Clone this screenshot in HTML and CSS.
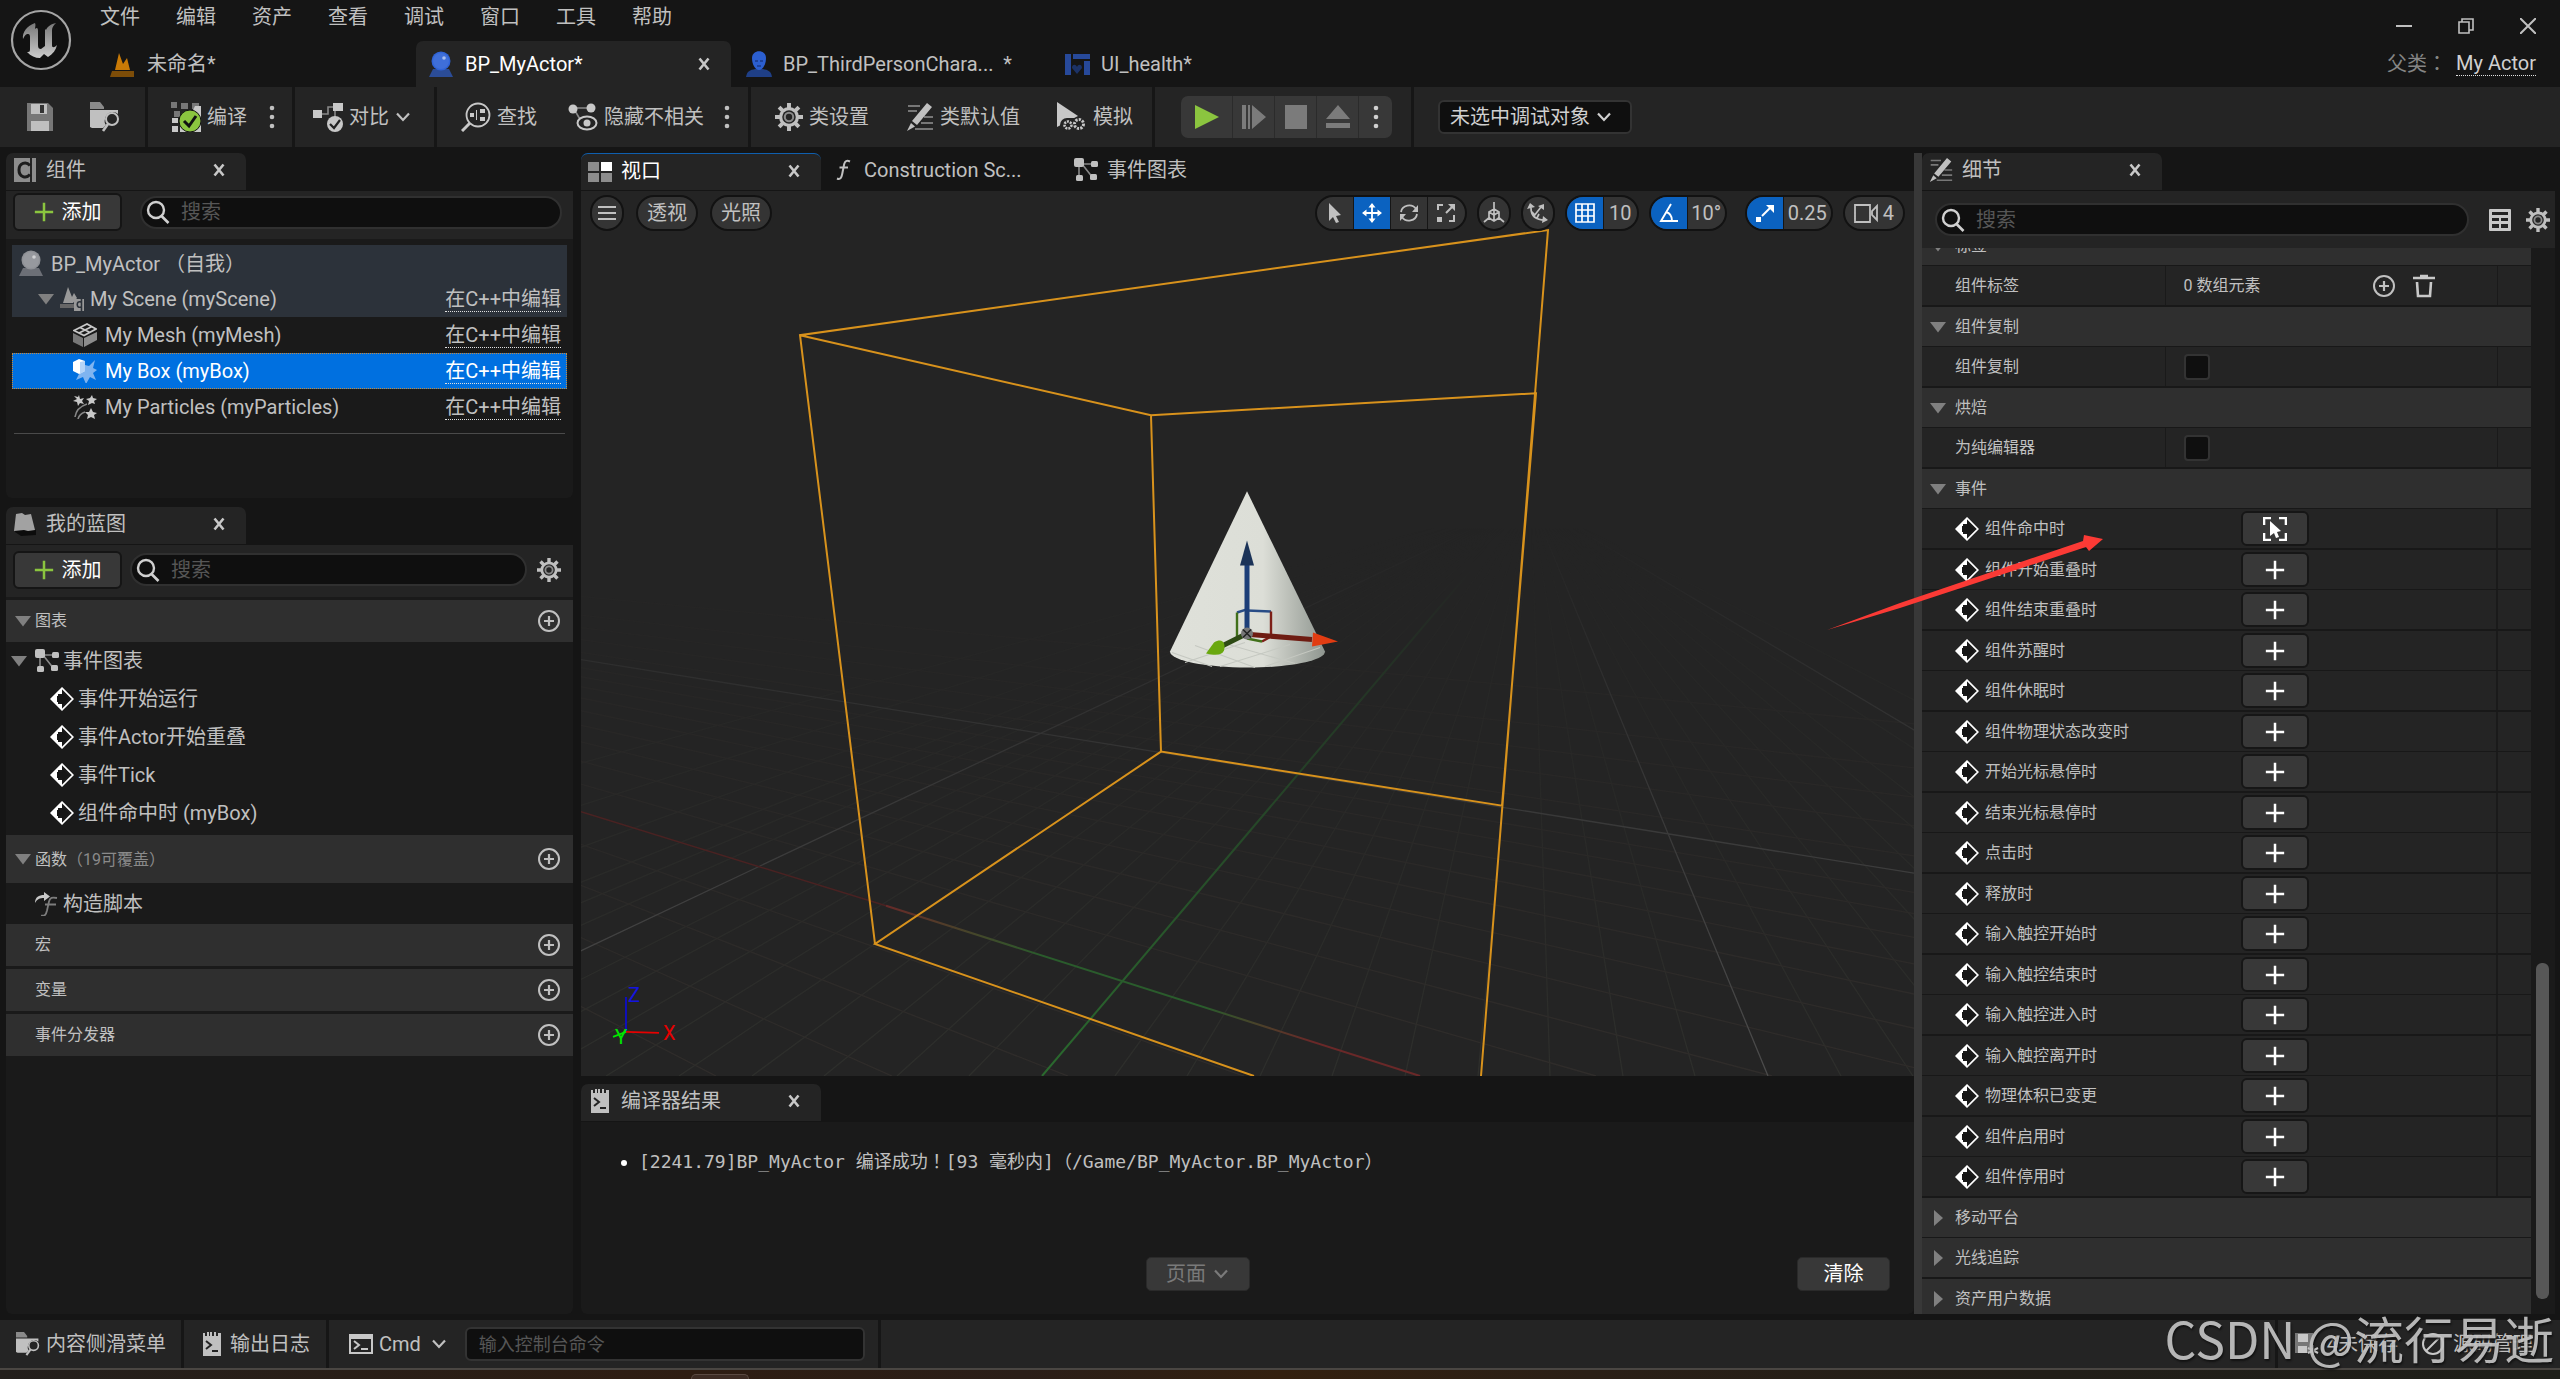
FILE: index.html
```html
<!DOCTYPE html>
<html lang="zh-CN">
<head>
<meta charset="utf-8">
<title>BP_MyActor</title>
<link rel="stylesheet" href="styles.css">
</head>
<body>
<svg class="sprite" aria-hidden="true">
  <symbol id="i-close" viewBox="0 0 24 24"><path d="M7.500 6.500L16.500 17.500M16.500 6.500L7.500 17.500" stroke="currentColor" stroke-width="2.600" fill="none"/></symbol>
  <symbol id="i-plus" viewBox="0 0 24 24"><path d="M12 1v22M1 12h22" stroke="currentColor" stroke-width="3" fill="none"/></symbol>
  <symbol id="i-chev" viewBox="0 0 16 16"><path d="M2 4.500L8 11l6-6.500" stroke="currentColor" stroke-width="2.200" fill="none"/></symbol>
  <symbol id="i-down" viewBox="0 0 16 16"><path d="M0 3h16L8 13.500z" fill="currentColor"/></symbol>
  <symbol id="i-right" viewBox="0 0 16 16"><path d="M4 0v16l9-8z" fill="currentColor"/></symbol>
  <symbol id="i-search" viewBox="0 0 24 24"><circle cx="10" cy="10" r="8" stroke="currentColor" stroke-width="2.400" fill="none"/><path d="M15.500 16l7 7" stroke="currentColor" stroke-width="2.600"/></symbol>
  <symbol id="i-dots" viewBox="0 0 8 24"><g fill="currentColor"><circle cx="4" cy="3" r="2.300"/><circle cx="4" cy="12" r="2.300"/><circle cx="4" cy="21" r="2.300"/></g></symbol>
  <symbol id="i-addc" viewBox="0 0 24 24"><circle cx="12" cy="12" r="10" stroke="currentColor" stroke-width="2" fill="none"/><path d="M12 7v10M7 12h10" stroke="currentColor" stroke-width="2.200"/></symbol>
  <symbol id="i-gear" viewBox="0 0 24 24"><path d="M12 0v24M0 12h24M3.500 3.500l17 17M20.500 3.500l-17 17" stroke="currentColor" stroke-width="3.400"/><circle cx="12" cy="12" r="8.600" fill="currentColor"/><circle cx="12" cy="12" r="5.800" fill="#242424"/><circle cx="12" cy="12" r="3.600" stroke="#8a8a8a" stroke-width="1.800" fill="none"/></symbol>
  <symbol id="i-pen" viewBox="0 0 28 28"><path d="M2 3h12M2 8h9M18 14h9M15 20h12M9 26h18" stroke="#777" stroke-width="1.800"/><path d="M21 0l5 4L11 22l-5-4zM5 20l4 3.500L1 28z" fill="currentColor"/></symbol>
  <symbol id="i-event" viewBox="0 0 24 24"><path d="M12 1.200L22.800 12 12 22.800 1.200 12z" fill="#1a1a1a" stroke="#fff" stroke-width="1.700"/><path d="M12 1L1 12l11 11v-6H8V7h4z" fill="#fff"/><path d="M7 9h5V6l6.500 6-6.500 6v-3H7z" fill="#161616"/></symbol>
  <symbol id="i-graph" viewBox="0 0 24 24"><path d="M6 6h15M5 6v14M8 6l11 14" stroke="#888" stroke-width="1.600"/><g fill="currentColor"><rect width="10" height="9" rx="2"/><rect x="17" y="3" width="7" height="6" rx="1.500"/><rect x="2" y="17" width="7" height="6" rx="1.500"/><rect x="16" y="16" width="7" height="6" rx="1.500"/></g></symbol>
  <symbol id="i-func" viewBox="0 0 24 24"><path d="M6 20.500c3.500 1.500 4.500-1 5.200-4.500l2-10c.8-3 2.500-4 5.800-2.500M8.500 9.500h8.500" stroke="currentColor" stroke-width="2" fill="none"/></symbol>
  <symbol id="i-folder" viewBox="0 0 30 30"><path d="M0 0h10l4 5v2H0z" fill="#8a8a8a"/><path d="M0 8h28v4c-4-4-12-2-13 5-1 3 0 5 1 6l-3 3H2L0 25z" fill="currentColor"/><circle cx="22" cy="17" r="6" fill="none" stroke="currentColor" stroke-width="2"/><path d="M18 22l-5 7" stroke="currentColor" stroke-width="2.600"/></symbol>
  <symbol id="i-log" viewBox="0 0 18 24"><path d="M0 1h2v3h2V0h2v4h1V0h2v4h2V0h2v4h2V1h3v23H0z" fill="currentColor"/><path d="M3 9l5 4-5 4M9 19h6" stroke="#222" stroke-width="2" fill="none"/></symbol>
  <symbol id="i-save" viewBox="0 0 28 28"><path d="M1 0h21l5 5v23H1z" fill="#777"/><path d="M5 1h16v10H5zM5 18h18v10H5z" fill="currentColor"/><path d="M14 2h4v8h-4z" fill="#333"/></symbol>
  <symbol id="i-actor" viewBox="0 0 24 26"><path d="M4 18l-4 8h24l-4-8z" fill="currentColor" opacity=".65"/><circle cx="12" cy="10" r="9.500" fill="currentColor"/><circle cx="12" cy="10" r="8" fill="#fff" opacity=".08"/><circle cx="15" cy="7" r="1.800" fill="#fff" opacity=".55"/></symbol>
</svg>

<header class="titlebar">
  <div class="logo"><svg viewBox="0 0 64 64" width="64" height="64"><defs><linearGradient id="lg" x2="0" y2="1"><stop stop-color="#777"/><stop offset="1" stop-color="#ccc"/></linearGradient></defs><circle cx="32" cy="32" r="29" fill="#111" stroke="#a5a5a5" stroke-width="2.200"/><path d="M26 15C18 18 13 24 14 31c2-4 3-5 5-5 2 0 2 2 2 4v11c0 3-1 3-3 3 4 4 8 6 13 6l4-4 4 3c5-3 8-7 9-12-3 3-5 3-5 0V22c0-3 2-5 4-7-5 1-9 4-10 7l-1-1v17l-4 3c-2 0-3-1-3-4V23c0-3-1-4-3-2 0-2 1-4 0-6z" fill="url(#lg)"/></svg></div>
  <div class="title-mid">
    <nav class="menu"><button>文件</button><button>编辑</button><button>资产</button><button>查看</button><button>调试</button><button>窗口</button><button>工具</button><button>帮助</button></nav>
    <div class="doc-tabs">
      <div class="doc-tab"><svg class="ic26" viewBox="0 0 26 26"><path d="M2 20h22v6H0z" fill="#7d4d08"/><path d="M5 19L9 2l4 11 4-6 3 12z" fill="#c97a06"/></svg><span>未命名*</span></div>
      <div class="doc-tab active"><svg class="ic26 blue"><use href="#i-actor"/></svg><span>BP_MyActor*</span><button class="x" aria-label="关闭"><svg class="ic24"><use href="#i-close"/></svg></button></div>
      <div class="doc-tab"><svg class="ic26" viewBox="0 0 26 26"><path d="M0 26c1-6 4-7 9-8h8c5 1 8 2 9 8z" fill="#1f3f86"/><path d="M6 7c0-9 14-9 14 0 0 6-3 12-7 12S6 13 6 7z" fill="#2c5fd0"/><path d="M9 10h3M14 10h3M11 15h4" stroke="#183a8a" stroke-width="1.500"/></svg><span>BP_ThirdPersonChara... &nbsp;*</span></div>
      <div class="doc-tab"><svg class="ic26" viewBox="0 0 26 26"><path d="M1 3h6v21H1zM9 3h17v5H9zM20 10h6v14h-6z" fill="#27499a"/><path d="M13 23l-5-6c0-4 4-4 5-1 1-3 5-3 5 1z" fill="#1c3266"/></svg><span>UI_health*</span></div>
    </div>
  </div>
  <div class="title-right">
    <div class="win"><button aria-label="最小化"><svg viewBox="0 0 16 16"><path d="M0 8h16" stroke="currentColor" stroke-width="2"/></svg></button><button aria-label="还原"><svg viewBox="0 0 16 16"><path d="M1 4h10v11H1zM4 4V1h11v11h-4" fill="none" stroke="currentColor" stroke-width="1.600"/></svg></button><button aria-label="关闭"><svg viewBox="0 0 16 16"><path d="M0 0l16 16M16 0L0 16" stroke="currentColor" stroke-width="2"/></svg></button></div>
    <div class="parent"><span>父类<i class="fw" lang="zh-TW">：</i></span><a class="dotted" href="#">My Actor</a></div>
  </div>
</header>

<div class="toolbar">
  <div class="tg g1"><button aria-label="保存"><svg class="ic28"><use href="#i-save"/></svg></button><button aria-label="浏览"><svg class="ic30"><use href="#i-folder"/></svg></button></div>
  <div class="tg g2"><button><svg class="ic30" viewBox="0 0 30 30"><g fill="#777"><path d="M0 0h6v6H0zM3 9h6v6H3zM10 1h7v6h-7zM21 1h7v6h-7z"/></g><path d="M1 16h6v5H1zM1 24h6v6H1zM24 4h6v26H9v-6h5z" fill="#c8c8c8"/><circle cx="19" cy="19" r="11" fill="#8bc53f" stroke="#111"/><path d="M13 19l5 5 7-10" fill="none" stroke="#111" stroke-width="3"/></svg>编译</button><button aria-label="编译选项"><svg class="dots"><use href="#i-dots"/></svg></button></div>
  <div class="tg g3"><button><svg class="ic30" viewBox="0 0 30 30"><path d="M8 12h7V5h7M22 8v8" stroke="#888" stroke-width="1.600" fill="none"/><path d="M0 8h9v8H0zM20 1h10v8H20z" fill="#c8c8c8"/><circle cx="22" cy="22" r="8" fill="#c8c8c8"/><path d="M17 22l4 4 6-8" stroke="#222" stroke-width="2.200" fill="none"/></svg>对比<svg class="ic16"><use href="#i-chev"/></svg></button></div>
  <div class="tg g4"><button><svg class="ic30" viewBox="0 0 30 30"><circle cx="17" cy="13" r="11.500" fill="none" stroke="#c8c8c8" stroke-width="1.800"/><path d="M9 21l-8 8" stroke="#c8c8c8" stroke-width="3"/><path d="M9 11h4v4H9zM19 7h5v4h-5zM19 15h5v4h-5zM15 8h1v10h-1z" fill="#c8c8c8"/></svg>查找</button><button><svg class="ic30" viewBox="0 0 30 30"><path d="M6 6h16M6 7l7 12" stroke="#888" stroke-width="1.600"/><circle cx="5" cy="7" r="4.500" fill="#c8c8c8"/><circle cx="23" cy="6" r="4.500" fill="#c8c8c8"/><ellipse cx="19" cy="21" rx="9.500" ry="6.500" fill="#242424" stroke="#c8c8c8" stroke-width="2"/><circle cx="19" cy="21" r="3.500" fill="#c8c8c8"/></svg>隐藏不相关</button><button aria-label="更多"><svg class="dots"><use href="#i-dots"/></svg></button></div>
  <div class="tg g5"><button><svg class="ic28"><use href="#i-gear"/></svg>类设置</button><button><svg class="ic28"><use href="#i-pen"/></svg>类默认值</button><button><svg class="ic30" viewBox="0 0 30 30"><path d="M0 0l21 14L0 25z" fill="#c8c8c8"/><rect x="3" y="16" width="27" height="14" rx="7" fill="#242424"/><circle cx="11" cy="23" r="3.500" fill="none" stroke="#c8c8c8" stroke-width="2.600" stroke-dasharray="2 1"/><circle cx="22" cy="22" r="4.500" fill="none" stroke="#c8c8c8" stroke-width="3" stroke-dasharray="2.200 1.200"/></svg>模拟</button></div>
  <div class="tg g6"><div class="play">
    <button class="first" aria-label="播放"><svg viewBox="0 0 24 24"><path d="M0 0l24 12L0 24z" fill="#8bc53f"/></svg></button>
    <button aria-label="步进"><svg viewBox="0 0 24 24"><path d="M0 0h4v24H0zM6 0h2v24H6zM10 0l14 12L10 24z" fill="#7b7b7b"/></svg></button>
    <button aria-label="停止"><svg viewBox="0 0 24 24"><path d="M1 0h22v24H1z" fill="#7b7b7b"/></svg></button>
    <button aria-label="弹出"><svg viewBox="0 0 24 24"><path d="M12 0l12 14H0zM0 18h24v5H0z" fill="#7b7b7b"/></svg></button>
    <button class="last" aria-label="播放选项"><svg class="dots"><use href="#i-dots"/></svg></button>
  </div></div>
  <div class="tg g7"><button class="debug">未选中调试对象<svg class="ic16"><use href="#i-chev"/></svg></button></div>
</div>

<main class="work">
  <div class="col-left">
    <section class="panel comps">
      <div class="tabs"><div class="tab on"><svg class="ic24" viewBox="0 0 24 24"><path d="M1 0h14v24H1z" fill="#8d8d8d"/><path d="M19 0h4v24h-4z" fill="#8d8d8d"/><path d="M15 0h2v24h-2z" fill="#8d8d8d"/><path d="M17 7.500C13 3 6 5 6 12s7 9 11 4.500" stroke="#1c1c1c" stroke-width="3" fill="none"/></svg><span>组件</span><button class="x" aria-label="关闭"><svg class="ic24"><use href="#i-close"/></svg></button></div></div>
      <div class="bar bar-a"><button class="add"><svg class="ic20"><use href="#i-plus"/></svg>添加</button><label class="search"><svg class="ic24"><use href="#i-search"/></svg><input placeholder="搜索" aria-label="搜索组件"></label></div>
      <div class="tree">
        <div class="row dim r0"><svg class="ic26"><use href="#i-actor"/></svg><span>BP_MyActor <i class="fw" lang="zh-TW">（</i>自我<i class="fw" lang="zh-TW">）</i></span></div>
        <div class="row dim r1"><svg class="ic16 arrow"><use href="#i-down"/></svg><svg class="ic24" viewBox="0 0 24 24"><path d="M0 17h18v4H0z" fill="#666"/><path d="M3 16L8 0l4 10 2-4 3 5-4 5z" fill="#999"/><path d="M14 12h10v12H14z" fill="#999"/><path d="M21 15c-5-2-5 7 0 5M21.500 12v12" stroke="#2c323a" stroke-width="1.600" fill="none"/></svg><span>My Scene (myScene)</span><a href="#" class="dotted">在C++中编辑</a></div>
        <div class="row r2"><svg class="ic24" viewBox="0 0 24 24"><path d="M0 10l10 5v9L0 19z" fill="#777"/><path d="M24 9l-13 6v9l13-7z" fill="#8c8c8c"/><path d="M1 7.500L14 1l9 5-12 6.500zM7 4.500l10 5M6 10L19 3.500" fill="none" stroke="#c8c8c8" stroke-width="1.700"/></svg><span>My Mesh (myMesh)</span><a href="#" class="dotted">在C++中编辑</a></div>
        <div class="row r2 sel"><svg class="ic24" viewBox="0 0 24 24"><path d="M12 6l4 1 6-6-2 8 4 2-4 3 3 7-6-3-4 7-3-7-7 3 4-8z" fill="#7fb4f0"/><path d="M0 3l6-3 6 2v10l-6 3-6-3z" fill="#fff"/><path d="M7 3l5-1v10l-5 3z" fill="#b5d4f7"/></svg><span>My Box (myBox)</span><a href="#" class="dotted">在C++中编辑</a></div>
        <div class="row r2"><svg class="ic24" viewBox="0 0 24 24"><path d="M6 0l1 4 4-1-2 3 2 3-4-1-2 3-1-4-4-1 4-2-3-3 4 1zM19 0l1 3 4 1-3 2 1 3-3-1-4 2 1-4-3-2 4-1zM18 13l2 4 4 1-3 2 1 4-4-2-4 2 1-4-3-3 4 0z" fill="#c8c8c8"/><path d="M2 22C3 15 8 11 14 9M5 24c1-4 4-6 7-7" stroke="#888" stroke-width="1.600" fill="none"/></svg><span>My Particles (myParticles)</span><a href="#" class="dotted">在C++中编辑</a></div>
        <hr>
      </div>
    </section>
    <section class="panel mybp">
      <div class="tabs"><div class="tab on"><svg class="ic24" viewBox="0 0 24 24"><path d="M2 16l21 2v5l-15 1-6-4z" fill="#0c0c0c"/><path d="M3 2l6-1 3 2 6-1 4 16-7 1-4-1-10 1z" fill="#a2a2a2"/></svg><span>我的蓝图</span><button class="x" aria-label="关闭"><svg class="ic24"><use href="#i-close"/></svg></button></div></div>
      <div class="bar bar-b"><button class="add"><svg class="ic20"><use href="#i-plus"/></svg>添加</button><label class="search"><svg class="ic24"><use href="#i-search"/></svg><input placeholder="搜索" aria-label="搜索蓝图"></label><button class="opt" aria-label="设置"><svg class="ic24"><use href="#i-gear"/></svg></button></div>
      <div class="outline">
        <div class="sec"><svg class="ic16 arrow"><use href="#i-down"/></svg><span>图表</span><button aria-label="添加图表"><svg class="ic24"><use href="#i-addc"/></svg></button></div>
        <div class="item top"><svg class="ic16 arrow"><use href="#i-down"/></svg><svg class="ic24"><use href="#i-graph"/></svg><span>事件图表</span></div>
        <div class="item"><svg class="ic24"><use href="#i-event"/></svg><span>事件开始运行</span></div>
        <div class="item"><svg class="ic24"><use href="#i-event"/></svg><span>事件Actor开始重叠</span></div>
        <div class="item"><svg class="ic24"><use href="#i-event"/></svg><span>事件Tick</span></div>
        <div class="item"><svg class="ic24"><use href="#i-event"/></svg><span>组件命中时 (myBox)</span></div>
        <div class="sec tall"><svg class="ic16 arrow"><use href="#i-down"/></svg><span>函数<small><i class="fw" lang="zh-TW">（</i>19可覆盖<i class="fw" lang="zh-TW">）</i></small></span><button aria-label="添加函数"><svg class="ic24"><use href="#i-addc"/></svg></button></div>
        <div class="item fn"><svg class="ic24" viewBox="0 0 24 24"><path d="M6 23.500c4 1 5-1 6-5l2-9c1-4 3-4.500 8-3.500M10 12.500h11" stroke="#7d7d7d" stroke-width="1.800" fill="none"/><path d="M0 11c0-6 4-8 9-8V0l6 4.500L9 9V6C5 6 2 7 0 11z" fill="#c8c8c8"/></svg><span>构造脚本</span></div>
        <div class="sec leaf"><span>宏</span><button aria-label="添加宏"><svg class="ic24"><use href="#i-addc"/></svg></button></div>
        <div class="sec leaf"><span>变量</span><button aria-label="添加变量"><svg class="ic24"><use href="#i-addc"/></svg></button></div>
        <div class="sec leaf"><span>事件分发器</span><button aria-label="添加事件分发器"><svg class="ic24"><use href="#i-addc"/></svg></button></div>
      </div>
    </section>
  </div>

  <div class="col-mid">
    <section class="panel view">
      <div class="tabs">
        <div class="tab on focus"><svg class="ic24" viewBox="0 0 24 24"><path d="M0 3h11v9H0zM0 14h11v9H0zM13 14h11v9H13z" fill="#8d8d8d"/><path d="M13 3h11v9H13z" fill="#fff"/></svg><span>视口</span><button class="x" aria-label="关闭"><svg class="ic24"><use href="#i-close"/></svg></button></div>
        <div class="tab"><svg class="ic24"><use href="#i-func"/></svg><span>Construction Sc...</span></div>
        <div class="tab"><svg class="ic24"><use href="#i-graph"/></svg><span>事件图表</span></div>
      </div>
      <div class="scene">
        <svg class="world" viewBox="581 191 1333 884" preserveAspectRatio="none">
          <defs>
            <linearGradient id="fade" x2="0" y2="1"><stop offset=".38" stop-color="#000"/><stop offset=".75" stop-color="#999"/><stop offset="1" stop-color="#fff"/></linearGradient>
            <mask id="m" maskUnits="userSpaceOnUse" x="581" y="191" width="1333" height="884"><rect x="581" y="191" width="1333" height="884" fill="url(#fade)"/></mask>
            <linearGradient id="ax" gradientUnits="userSpaceOnUse" x1="880" y1="903" x2="1420" y2="1075"><stop stop-color="#6a2828"/><stop offset=".3" stop-color="#2a5c2c"/><stop offset=".6" stop-color="#2a5c2c"/><stop offset=".8" stop-color="#6a2828"/></linearGradient>
            <linearGradient id="ay" x2="0" y2="1"><stop stop-color="#242424"/><stop offset=".3" stop-color="#243a26"/><stop offset="1" stop-color="#2a6a2e"/></linearGradient>
            <linearGradient id="cone"><stop stop-color="#dfe1da"/><stop offset=".6" stop-color="#dcded7"/><stop offset=".78" stop-color="#b9bdb6"/><stop offset="1" stop-color="#8f9690"/></linearGradient>
          </defs>
          <rect x="581" y="191" width="1333" height="884" fill="#242424"/>
          <g mask="url(#m)" fill="none" stroke-width="1.300">
            <path stroke="#2e2f2c" d="M1531 501l-562 574M1531 501l-634 574M1531 501l-707 574M1531 501l-779 574M1531 501l-852 574M1531 501l-925 574M1531 501l-997 574M1531 501l-1070 574M1531 501l-1142 574M1531 501l-1288 574M1531 501l-1360 574M1531 501l-1433 574M1531 501l-1578 574M1531 501l-1796 574M1531 501l-2086 574M1531 501l-416 574M1531 501l-344 574M1531 501l-271 574M1531 501l-199 574M1531 501l-126 574M1531 501l-53 574M1531 501l19 574M1531 501l92 574M1531 501l164 574M1531 501l310 574M1531 501l382 574M1531 501l455 574M1531 501l527 574M1531 501l600 574M1531 501l673 574M1531 501l745 574M1531 501l890 574M1531 501l1108 574"/>
            <path stroke="#302d2b" d="M-395 503l1111 572M-395 503l1287 572M-395 503l1463 572M-395 503l1639 572M-395 503l1991 572M-395 503l2167 572M-395 503l2343 572M-395 503l2519 572M-395 503l2695 572M-395 503l2871 572M-395 503l3047 572M-395 503l3223 572M-395 503l3399 572M-395 503l3751 572M-395 503l4100 572M-395 503l4500 572M-395 503l5000 572M-395 503l6000 572"/>
            <path stroke="#4c4c4c" d="M1531 501l237 574M1531 501l-1215 574M-395 503l3575 572M1531 501l963 574"/>
          </g>
          <path d="M581 811L886 905" stroke="#4a2222" stroke-width="1.500"/>
          <path d="M886 905l534 170" stroke="url(#ax)" stroke-width="2"/>
          <path d="M1042 1075L1470 571" stroke="url(#ay)" stroke-width="2"/>
          <path d="M1247 491l78 160c0 9-35 16-77 16s-78-7-78-16z" fill="url(#cone)"/>
          <path d="M1172 652l40 14M1195 645l60 22M1225 643l70 20M1185 662l60-20M1220 666l70-22M1265 666l55-19" stroke="#c5c8c1" stroke-width="1" fill="none"/>
          <g fill="none" stroke="#d8921c" stroke-width="2"><path d="M875 943L800 335 1548 230 1481 1075M800 335l351 80 385-22-34 412-341-54L875 943l379 132M1151 415l10 336"/></g>
          <g fill="none" stroke-width="2.400"><path d="M1247 610l24 1" stroke="#284c86"/><path d="M1237 612l10-3" stroke="#284c86"/><path d="M1271 611v25l-9 5" stroke="#7d2018"/><path d="M1237 612v26M1247 638l15 3" stroke="#41701a"/></g>
          <path d="M1247 630v-67" stroke="#1c3e78" stroke-width="5"/><path d="M1247 540l7 25h-14z" fill="#1b3358"/>
          <path d="M1250 634l62 5" stroke="#6e1c12" stroke-width="5"/><path d="M1313 632l25 9-26 5z" fill="#e23c12"/>
          <path d="M1243 635l-20 10" stroke="#2d4a14" stroke-width="5"/><path d="M1206 653l8-11c8-5 12 0 10 8-2 5-9 5-18 3z" fill="#6aa80f"/>
          <circle cx="1247" cy="633" r="6" fill="#777"/><path d="M1243 629l8 8M1251 629l-8 8" stroke="#222" stroke-width="1.500"/>
          <path d="M626 1031V996" stroke="#0a0ae0" stroke-width="1.600"/><path d="M626 1031l33 1" stroke="#e60000" stroke-width="1.800"/><path d="M626 1031l-13 5" stroke="#00e600" stroke-width="1.800"/>
          <text x="628" y="1001" fill="#1414e0" class="axis">Z</text><text x="663" y="1039" fill="#e60000" class="axis">X</text><text x="615" y="1043" fill="#00e600" class="axis">Y</text>
        </svg>
        <div class="vbar">
          <button class="pill round lead" aria-label="视口选项"><svg class="ic20" viewBox="0 0 20 20"><path d="M1 4h18M1 10h18M1 16h18" stroke="currentColor" stroke-width="1.800"/></svg></button>
          <button class="pill lead">透视</button><button class="pill">光照</button>
          <span class="grow"></span>
          <div class="seg tools">
            <button aria-label="选择"><svg class="ic20" viewBox="0 0 20 20"><path d="M4 0l12 12-5 1 3 6-3 1-3-6-4 4z" fill="currentColor"/></svg></button>
            <button class="on" aria-label="移动"><svg class="ic20" viewBox="0 0 20 20"><path d="M10 2v16M2 10h16" stroke="currentColor" stroke-width="1.800"/><path d="M10 0l3.500 4.500h-7zM10 20l3.500-4.500h-7zM0 10l4.500-3.500v7zM20 10l-4.500-3.500v7z" fill="currentColor"/></svg></button>
            <button aria-label="旋转"><svg class="ic20" viewBox="0 0 20 20"><path d="M2 9c1-7 11-9 15-3M18 11c-1 7-11 9-15 3" stroke="currentColor" stroke-width="1.800" fill="none"/><path d="M19 2v7h-6zM1 18v-7h6z" fill="currentColor"/></svg></button>
            <button aria-label="缩放"><svg class="ic20" viewBox="0 0 20 20"><path d="M2 7V2h5M18 12v6h-5M10 10l6-6" stroke="currentColor" stroke-width="2" fill="none"/><path d="M12 1h7v7zM1 14h5v5H1z" fill="currentColor"/></svg></button>
          </div>
          <button class="pill round" aria-label="坐标系"><svg class="ic24" viewBox="0 0 24 24"><path d="M12 1v8M12 14v-4M8 16l-6 5M16 16l6 5M12 8l5 3v6l-5 3-5-3v-6zM7 11l5 3 5-3M12 14v6" stroke="currentColor" stroke-width="1.700" fill="none"/></svg></button>
          <button class="pill round" aria-label="表面对齐"><svg class="ic24" viewBox="0 0 24 24"><path d="M5 7c0 8 5 12 14 12M8 15l7-9M5 10l4 4M11 17l2-4" stroke="currentColor" stroke-width="1.700" fill="none"/><path d="M1 8l3-6 5 4zM12 5l6-2v6zM17 15l5 4-6 3z" fill="currentColor"/></svg></button>
          <div class="seg grid"><button class="on" aria-label="网格对齐"><svg class="ic20" viewBox="0 0 20 20"><path d="M1 1h18v18H1zM7 1v18M13 1v18M1 7h18M1 13h18" stroke="currentColor" stroke-width="1.700" fill="none"/></svg></button><button>10</button></div>
          <div class="seg ang"><button class="on" aria-label="角度对齐"><svg class="ic20" viewBox="0 0 20 20"><path d="M12 1L2 18h17M7 9c4 1 6 4 6 9" stroke="currentColor" stroke-width="1.900" fill="none"/></svg></button><button>10°</button></div>
          <div class="seg scl"><button class="on" aria-label="缩放对齐"><svg class="ic20" viewBox="0 0 20 20"><path d="M7 13l8-8" stroke="currentColor" stroke-width="2"/><path d="M11 2h8v8zM1 14h5v5H1z" fill="currentColor"/></svg></button><button>0.25</button></div>
          <button class="pill cam"><svg class="ic24" viewBox="0 0 24 24"><path d="M1 4h15v17H1zM23 5v14l-5-5v-4z" stroke="currentColor" stroke-width="1.800" fill="none"/></svg>4</button>
        </div>
      </div>
    </section>
    <section class="panel results">
      <div class="tabs"><div class="tab on"><svg class="ic24"><use href="#i-log"/></svg><span>编译器结果</span><button class="x" aria-label="关闭"><svg class="ic24"><use href="#i-close"/></svg></button></div></div>
      <div class="log"><ul><li>[2241.79]BP_MyActor 编译成功<i class="fw" lang="zh-TW">！</i>[93 毫秒内]<i class="fw" lang="zh-TW">（</i>/Game/BP_MyActor.BP_MyActor<i class="fw" lang="zh-TW">）</i></li></ul>
        <div class="log-actions"><button class="page" disabled>页面<svg class="ic16"><use href="#i-chev"/></svg></button><button class="clear">清除</button></div></div>
    </section>
  </div>

  <div class="col-right">
    <section class="panel details">
      <div class="tabs"><div class="tab on"><svg class="ic24"><use href="#i-pen"/></svg><span>细节</span><button class="x" aria-label="关闭"><svg class="ic24"><use href="#i-close"/></svg></button></div></div>
      <div class="bar bar-c"><label class="search"><svg class="ic24"><use href="#i-search"/></svg><input placeholder="搜索" aria-label="搜索细节"></label><button aria-label="属性矩阵"><svg class="ic24" viewBox="0 0 24 24"><rect x="1" y="1" width="22" height="22" rx="1" fill="#c8c8c8"/><path d="M4 4h16v3H4zM4 10h7v3H4zM13 10h7v3h-7zM4 16h7v4H4zM13 16h7v4h-7z" fill="#242424"/></svg></button><button aria-label="设置"><svg class="ic24"><use href="#i-gear"/></svg></button></div>
      <div class="scroll">
        <div class="props">
          <div class="cat cut"><svg class="ic16 arrow"><use href="#i-down"/></svg>标签</div>
          <div class="prop"><span class="k">组件标签</span><span class="v">0 数组元素<span class="acts"><button aria-label="添加元素"><svg class="ic24"><use href="#i-addc"/></svg></button><button aria-label="清空"><svg class="ic24" viewBox="0 0 24 24"><path d="M1 4h22M8 2h8" stroke="#c8c8c8" stroke-width="2.600"/><path d="M5 8l1 14h12l1-14" stroke="#c8c8c8" stroke-width="2.600" fill="none"/></svg></button></span></span><span class="e"></span></div>
          <div class="cat"><svg class="ic16 arrow"><use href="#i-down"/></svg>组件复制</div>
          <div class="prop"><label class="k" for="rep">组件复制</label><span class="v"><input type="checkbox" id="rep"></span><span class="e"></span></div>
          <div class="cat"><svg class="ic16 arrow"><use href="#i-down"/></svg>烘焙</div>
          <div class="prop"><label class="k" for="edo">为纯编辑器</label><span class="v"><input type="checkbox" id="edo"></span><span class="e"></span></div>
          <div class="cat"><svg class="ic16 arrow"><use href="#i-down"/></svg>事件</div>
          <div class="prop ev"><span class="k"><svg class="ic24"><use href="#i-event"/></svg>组件命中时</span><span class="v"><button aria-label="查看组件命中时"><svg class="ic24" viewBox="0 0 24 24"><path d="M1 8V1h7M16 1h7v7M23 16v7h-7M8 23H1v-7" stroke="#fff" stroke-width="2.600" fill="none"/><path d="M7 4l11 10-4 1 2 5-3 1-2-5-4 3z" fill="#fff"/></svg></button></span><span class="e"></span></div>
          <div class="prop ev"><span class="k"><svg class="ic24"><use href="#i-event"/></svg>组件开始重叠时</span><span class="v"><button aria-label="添加"><svg class="ic20"><use href="#i-plus"/></svg></button></span><span class="e"></span></div>
          <div class="prop ev"><span class="k"><svg class="ic24"><use href="#i-event"/></svg>组件结束重叠时</span><span class="v"><button aria-label="添加"><svg class="ic20"><use href="#i-plus"/></svg></button></span><span class="e"></span></div>
          <div class="prop ev"><span class="k"><svg class="ic24"><use href="#i-event"/></svg>组件苏醒时</span><span class="v"><button aria-label="添加"><svg class="ic20"><use href="#i-plus"/></svg></button></span><span class="e"></span></div>
          <div class="prop ev"><span class="k"><svg class="ic24"><use href="#i-event"/></svg>组件休眠时</span><span class="v"><button aria-label="添加"><svg class="ic20"><use href="#i-plus"/></svg></button></span><span class="e"></span></div>
          <div class="prop ev"><span class="k"><svg class="ic24"><use href="#i-event"/></svg>组件物理状态改变时</span><span class="v"><button aria-label="添加"><svg class="ic20"><use href="#i-plus"/></svg></button></span><span class="e"></span></div>
          <div class="prop ev"><span class="k"><svg class="ic24"><use href="#i-event"/></svg>开始光标悬停时</span><span class="v"><button aria-label="添加"><svg class="ic20"><use href="#i-plus"/></svg></button></span><span class="e"></span></div>
          <div class="prop ev"><span class="k"><svg class="ic24"><use href="#i-event"/></svg>结束光标悬停时</span><span class="v"><button aria-label="添加"><svg class="ic20"><use href="#i-plus"/></svg></button></span><span class="e"></span></div>
          <div class="prop ev"><span class="k"><svg class="ic24"><use href="#i-event"/></svg>点击时</span><span class="v"><button aria-label="添加"><svg class="ic20"><use href="#i-plus"/></svg></button></span><span class="e"></span></div>
          <div class="prop ev"><span class="k"><svg class="ic24"><use href="#i-event"/></svg>释放时</span><span class="v"><button aria-label="添加"><svg class="ic20"><use href="#i-plus"/></svg></button></span><span class="e"></span></div>
          <div class="prop ev"><span class="k"><svg class="ic24"><use href="#i-event"/></svg>输入触控开始时</span><span class="v"><button aria-label="添加"><svg class="ic20"><use href="#i-plus"/></svg></button></span><span class="e"></span></div>
          <div class="prop ev"><span class="k"><svg class="ic24"><use href="#i-event"/></svg>输入触控结束时</span><span class="v"><button aria-label="添加"><svg class="ic20"><use href="#i-plus"/></svg></button></span><span class="e"></span></div>
          <div class="prop ev"><span class="k"><svg class="ic24"><use href="#i-event"/></svg>输入触控进入时</span><span class="v"><button aria-label="添加"><svg class="ic20"><use href="#i-plus"/></svg></button></span><span class="e"></span></div>
          <div class="prop ev"><span class="k"><svg class="ic24"><use href="#i-event"/></svg>输入触控离开时</span><span class="v"><button aria-label="添加"><svg class="ic20"><use href="#i-plus"/></svg></button></span><span class="e"></span></div>
          <div class="prop ev"><span class="k"><svg class="ic24"><use href="#i-event"/></svg>物理体积已变更</span><span class="v"><button aria-label="添加"><svg class="ic20"><use href="#i-plus"/></svg></button></span><span class="e"></span></div>
          <div class="prop ev"><span class="k"><svg class="ic24"><use href="#i-event"/></svg>组件启用时</span><span class="v"><button aria-label="添加"><svg class="ic20"><use href="#i-plus"/></svg></button></span><span class="e"></span></div>
          <div class="prop ev"><span class="k"><svg class="ic24"><use href="#i-event"/></svg>组件停用时</span><span class="v"><button aria-label="添加"><svg class="ic20"><use href="#i-plus"/></svg></button></span><span class="e"></span></div>
          <div class="cat"><svg class="ic16 arrow"><use href="#i-right"/></svg>移动平台</div>
          <div class="cat"><svg class="ic16 arrow"><use href="#i-right"/></svg>光线追踪</div>
          <div class="cat"><svg class="ic16 arrow"><use href="#i-right"/></svg>资产用户数据</div>
        </div>
        <div class="track"><div class="thumb"></div></div>
      </div>
    </section>
  </div>
</main>

<footer class="status">
  <button class="s1"><svg class="ic24"><use href="#i-folder"/></svg>内容侧滑菜单</button>
  <button class="s2"><svg class="ic24"><use href="#i-log"/></svg>输出日志</button>
  <div class="s3"><button><svg class="ic24" viewBox="0 0 24 24"><path d="M0 2h24v20H0z" fill="#c8c8c8"/><path d="M2 7h20v13H2z" fill="#242424"/><path d="M5 9l5 4-5 4M12 17h7" stroke="#c8c8c8" stroke-width="2" fill="none"/></svg>Cmd<svg class="ic16"><use href="#i-chev"/></svg></button><input placeholder="输入控制台命令" aria-label="控制台命令"></div>
  <span class="grow"></span>
  <div class="s4"><button><svg class="ic24" viewBox="0 0 24 24"><path d="M0 1h18v20H0z" fill="#777"/><path d="M3 2h10v8H3zM3 14h9v7H3z" fill="#c8c8c8"/><path d="M18 13v10M13 16l10 5M23 16l-10 5" stroke="#c8c8c8" stroke-width="2"/></svg>4未保存</button><button><svg class="ic24" viewBox="0 0 24 24"><circle cx="12" cy="12" r="10" fill="none" stroke="#c8c8c8" stroke-width="2"/><path d="M5 19L19 5" stroke="#c8c8c8" stroke-width="2"/></svg>源码管理</button></div>
</footer>
<div class="desk"><span></span></div>

<svg class="pointer" viewBox="0 0 276 98" aria-hidden="true"><path d="M0 97L73 70 256 8 257 2l19 4-14 12-3-4L73 75z" fill="#fb3a35"/></svg>
<div class="mark">CSDN @流行易逝</div>
</body>
</html>
```
FILE: styles.css
```css
* { box-sizing: border-box; }
html, body { height: 100%; }
body {
  margin: 0; position: relative; display: flex; flex-direction: column; overflow: hidden;
  background: #151515; color: #c0c0c0;
  font: 20px/24px Roboto, "Noto Sans CJK SC", sans-serif;
}
button { font: inherit; color: inherit; background: none; border: 0; padding: 0; margin: 0; display: flex; align-items: center; justify-content: center; white-space: nowrap; }
input { font: inherit; color: inherit; }
input::placeholder { color: #565656; opacity: 1; }
a { color: inherit; text-decoration: none; }
svg { flex: none; display: block; }
.sprite { position: absolute; width: 0; height: 0; }
.grow { flex: 1; }
.fw { font-family: "Noto Sans CJK TC", sans-serif; font-style: normal; }
.ic16 { width: 16px; height: 16px; }
.ic20 { width: 20px; height: 20px; }
.ic24 { width: 24px; height: 24px; }
.ic26 { width: 26px; height: 26px; }
.ic28 { width: 28px; height: 28px; }
.ic30 { width: 30px; height: 30px; }
.dots { width: 8px; height: 24px; }
.arrow { color: #808080; }
.dotted { border-bottom: 1px dotted #e0e0e0; }

/* title bar */
.titlebar { display: flex; flex: none; height: 87px; }
.logo { width: 82px; padding: 8px 0 0 9px; flex: none; }
.title-mid { flex: 1; display: flex; flex-direction: column; justify-content: space-between; }
.menu { display: flex; height: 34px; }
.menu button { padding: 0 18px; }
.doc-tabs { display: flex; gap: 3px; padding-left: 16px; }
.doc-tab { width: 315px; height: 46px; display: flex; align-items: center; gap: 11px; padding: 0 15px 0 12px; border-radius: 7px 7px 0 0; white-space: nowrap; }
.doc-tab.active { background: #242424; color: #fff; }
.x { margin-left: auto; color: #c8c8c8; }
.blue { color: #2f63d6; }
.title-right { flex: none; display: flex; flex-direction: column; align-items: flex-end; padding-right: 24px; }
.win { display: flex; height: 51px; gap: 46px; }
.win svg { width: 16px; height: 16px; }
.parent { display: flex; gap: 9px; }
.parent span { color: #858585; }
.parent a { color: #d0d0d0; }

/* toolbar */
.toolbar { flex: none; height: 60px; display: flex; background: #242424; }
.tg { display: flex; align-items: center; border-right: 3px solid #161616; }
.tg button { gap: 6px; }
.g1 { padding: 0 25px 0 26px; gap: 36px; }
.g2 { padding: 0 16px 0 23px; gap: 21px; }
.g3 { padding: 0 23px 0 18px; }
.g4 { padding: 0 17px 0 24px; gap: 31px; }
.g4 button:last-child { margin-left: -12px; }
.g5 { padding: 0 19px 0 24px; gap: 37px; }
.g6 { padding: 0 19px 0 26px; }
.g7 { border: 0; padding-left: 24px; }
.play { display: flex; height: 42px; background: #383838; border-radius: 7px; }
.play button { width: 42px; border-right: 1px solid #2b2b2b; }
.play .first { width: 52px; }
.play .last { width: 33px; border: 0; }
.play svg { width: 24px; height: 24px; }
.play .dots { width: 8px; color: #d0d0d0; }
.debug { height: 34px; padding: 0 18px 0 10px; background: #0f0f0f; border: 2px solid #333; border-radius: 6px; color: #d0d0d0; }

/* work area */
.work { flex: 1; min-height: 0; display: grid; grid-template-columns: 567fr 1341fr 641fr; padding: 6px 5px 6px 6px; }
.col-left, .col-mid, .col-right { display: flex; flex-direction: column; min-height: 0; min-width: 0; }
.col-left { gap: 9px; }
.col-mid { gap: 8px; padding-left: 8px; }
.panel { display: flex; flex-direction: column; min-height: 0; }
.tabs { display: flex; gap: 3px; height: 38px; flex: none; border-bottom: 1px solid #151515; }
.tab { width: 240px; display: flex; align-items: center; gap: 9px; padding: 0 15px 3px 7px; border-radius: 7px 7px 0 0; white-space: nowrap; }
.tab.on { background: #242424; }
.tab.focus { color: #fff; border-top: 1px solid #0f5fae; }
.bar { display: flex; align-items: center; background: #242424; flex: none; }
.add { width: 109px; height: 38px; gap: 8px; background: #383838; border: 2px solid #151515; border-radius: 6px; color: #fff; }
.add svg { color: #8bc53f; }
.search { flex: 1; min-width: 0; height: 33px; display: flex; align-items: center; gap: 11px; padding: 0 12px 0 4px; border: 2px solid #303030; border-radius: 17px; background: #0f0f0f; color: #d0d0d0; }
.search input { flex: 1; min-width: 0; background: none; border: 0; padding: 0; outline: 0; }
.bar-a { height: 48px; padding: 0 11px 6px 7px; gap: 18px; }
.bar-b { height: 52px; padding: 0 12px 3px 7px; gap: 8px; }
.bar-b .opt { margin-left: 2px; }
.bar-c { height: 57px; padding: 0 5px 0 13px; gap: 14px; }
.bar-c .search { margin-right: 5px; }

.comps { height: 345px; flex: none; }
.tree { flex: 1; padding: 6px; background: #1a1a1a; border-radius: 0 0 6px 6px; }
.row { height: 36px; display: flex; align-items: center; gap: 8px; padding: 0 6px; white-space: nowrap; }
.row span { flex: 1; }
.r0 { gap: 7px; }
.r0 .ic26 { color: #8f9196; }
.dim { background: #2c323a; }
.r1 { padding-left: 26px; gap: 6px; }
.r2 { padding-left: 61px; }
.sel { background: #0070e0; color: #fff; outline: 1px dotted #c98a3a; outline-offset: -1px; }
.tree hr { border: 0; border-top: 1px solid #4a4a4a; margin: 8px 2px 0; }

.mybp { flex: 1; background: #1a1a1a; border-radius: 0 0 6px 6px; }
.mybp .tabs { background: #151515; }
.outline { padding-top: 3px; }
.sec { height: 42px; display: flex; align-items: center; gap: 4px; padding: 0 12px 0 9px; background: #2f2f2f; font-size: 16px; }
.sec + .sec { margin-top: 3px; }
.sec span { flex: 1; }
.sec small { font-size: 16px; color: #8a8a8a; }
.sec.tall { height: 48px; margin-top: 3px; }
.sec.leaf { padding-left: 29px; }
.item { height: 38px; display: flex; align-items: center; gap: 4px; padding-left: 44px; }
.item.top { padding-left: 5px; }
.item.top .arrow { margin-right: 4px; }
.item.fn { height: 41px; padding-left: 29px; }

/* viewport */
.view { flex: 1; }
.scene { position: relative; flex: 1; min-height: 0; background: #242424; overflow: hidden; }
.world { position: absolute; inset: 0; width: 100%; height: 100%; }
.axis { font-size: 20px; }
.vbar { position: relative; display: flex; align-items: center; padding: 4px 9px; gap: 10px; }
.pill { height: 36px; padding: 0 9px; border: 2px solid #121212; border-radius: 18px; background: #343434; gap: 5px; }
.pill.round { width: 34px; padding: 0; }
.lead { margin-right: 2px; }
.seg { display: flex; height: 36px; border: 2px solid #121212; border-radius: 18px; overflow: hidden; background: #343434; }
.seg button { width: 37px; border-right: 1px solid #161616; }
.seg button:last-child { border: 0; }
.seg .on { background: #0b62c0; color: #fff; }
.grid button:last-child { width: 33px; }
.scl { margin-left: 8px; }
.scl button:last-child { width: 47px; }

.results { flex: none; height: 230px; }
.log { flex: 1; display: flex; flex-direction: column; justify-content: space-between; background: #1a1a1a; border-radius: 0 0 6px 6px; padding: 26px 24px 23px 17px; }
.log ul { margin: 0; padding-left: 41px; font: 18px/24px "DejaVu Sans Mono", "Noto Sans CJK SC", monospace; }
.log li::marker { color: #fff; }
.log-actions { display: grid; grid-template-columns: 1fr auto; align-items: center; }
.log-actions button { height: 34px; background: #383838; border: 1px solid #2a2a2a; border-radius: 5px; }
.log-actions .page { justify-self: center; width: 104px; gap: 7px; color: #7a7a7a; }
.log-actions .clear { width: 93px; color: #fff; }

/* details */
.col-right { border-left: 8px solid #383838; }
.details { flex: 1; background: #1a1a1a; }
.details .tabs { background: #151515; }
.scroll { flex: 1; min-height: 0; display: flex; overflow: hidden; }
.props { flex: 1; min-width: 0; font-size: 16px; }
.cat, .prop { height: 40px; border-bottom: 1px solid #181818; }
.cat:nth-child(even), .prop:nth-child(even) { height: 41px; border-bottom-width: 2px; }
.cat { display: flex; align-items: center; gap: 9px; padding-left: 8px; background: #2f2f2f; }
.cat.cut { margin-top: -22px; }
.prop { display: grid; grid-template-columns: 244fr 333fr 33fr; background: #242424; }
.k, .v { display: flex; align-items: center; white-space: nowrap; }
.prop .k { border-right: 1px solid #1a1a1a; }
.prop .v { border-right: 1px solid #1a1a1a; }
.k { padding-left: 33px; }
.v { padding: 0 61px 0 18px; justify-content: space-between; }
.acts { display: flex; gap: 16px; }
.prop.ev { grid-template-columns: 320fr 257fr 33fr; }
.ev .k { gap: 6px; border: 0; }
.prop.ev .k { border: 0; }
.prop.ev .v { padding: 0; border-right-width: 2px; }
.ev .v button { width: 68px; height: 35px; background: #383838; border: 2px solid #161616; border-radius: 6px; color: #fff; }
input[type=checkbox] { appearance: none; width: 26px; height: 26px; margin: 0; background: #0f0f0f; border: 2px solid #333; border-radius: 4px; }
.track { width: 24px; display: flex; flex-direction: column; justify-content: flex-end; padding: 0 6px 15px 5px; }
.thumb { height: 32%; border-radius: 6px; background: #575757; }

/* status bar */
.status { flex: none; height: 48px; display: flex; background: #242424; }
.status > * { display: flex; align-items: center; justify-content: flex-start; border-right: 3px solid #161616; gap: 6px; }
.s1 { padding: 0 15px 0 16px; }
.s2 { padding: 0 16px 0 16px; }
.s3 { padding: 0 13px 0 20px; }
.s3 button { gap: 6px; }
.s3 input { width: 400px; height: 34px; margin-left: 12px; padding: 0 12px; background: #0f0f0f; border: 2px solid #333; border-radius: 6px; font-size: 18px; }
.s3 .ic16 { margin-left: 4px; }
.status .s4 { padding: 0 27px 0 17px; border: 0; gap: 23px; }
.s4 button { gap: 8px; }
.desk { flex: none; height: 11px; border-top: 2px solid #4a4642; background: linear-gradient(90deg, #231f1c, #2e1d12 27%, #2a1e18 40%, #33200f 50%, #2a1f16 62%, #211e18 80%, #1e1f19); padding: 4px 0 0 27%; }
.desk span { display: block; width: 58px; height: 5px; border: 1px solid #5a4a42; border-bottom: 0; border-radius: 5px 5px 0 0; background: #3d2c24; }

.pointer { position: absolute; left: 71.37%; top: 533px; width: 276px; height: 98px; }
.mark { position: absolute; right: 6px; bottom: 10px; font: 50px/64px "Noto Sans CJK SC", sans-serif; color: #c3c3c3; opacity: .92; text-shadow: 1px 2px 2px #111; white-space: nowrap; }
```
